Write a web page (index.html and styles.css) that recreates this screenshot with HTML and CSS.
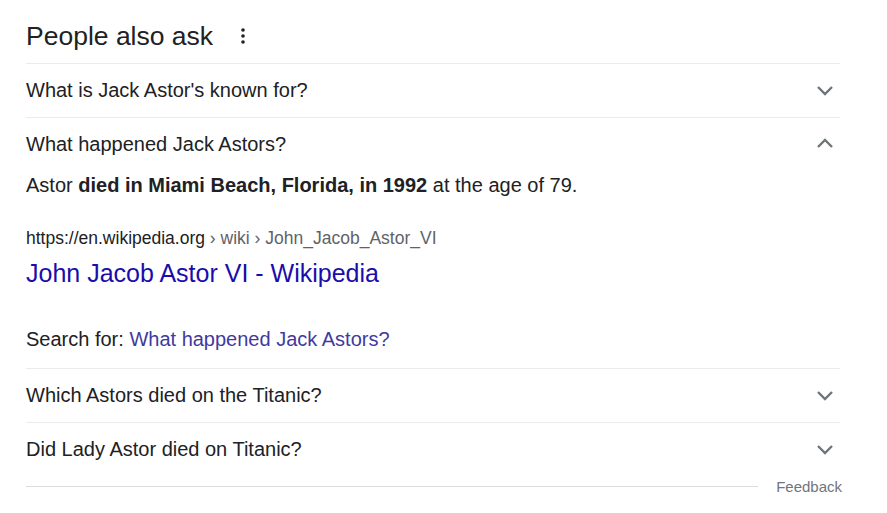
FILE: index.html
```html
<!DOCTYPE html>
<html lang="en">
<head>
<meta charset="utf-8">
<title>People also ask</title>
<link rel="stylesheet" href="styles.css">
</head>
<body>
<div class="paa">
  <div class="paa-head">
    <h2 class="paa-title">People also ask</h2>
    <svg class="dots" width="4" height="16" viewBox="0 0 4 16"><circle cx="2" cy="2" r="1.8"/><circle cx="2" cy="8" r="1.8"/><circle cx="2" cy="14" r="1.8"/></svg>
  </div>

  <div class="row">
    <span class="q">What is Jack Astor's known for?</span>
    <svg class="chev" width="18" height="12" viewBox="0 0 18 12"><polyline points="2,3 9,10 16,3"/></svg>
  </div>

  <div class="row">
    <span class="q">What happened Jack Astors?</span>
    <svg class="chev" width="18" height="12" viewBox="0 0 18 12"><polyline points="2,9 9,2 16,9"/></svg>
  </div>
  <div class="answer">
    <p class="ans-text">Astor <b>died in Miami Beach, Florida, in 1992</b> at the age of 79.</p>
    <div class="cite">https://en.wikipedia.org<span class="crumb"> › wiki › John_Jacob_Astor_VI</span></div>
    <a class="res-link" href="#">John Jacob Astor VI - Wikipedia</a>
    <p class="search-for">Search for: <a href="#">What happened Jack Astors?</a></p>
  </div>

  <div class="row">
    <span class="q">Which Astors died on the Titanic?</span>
    <svg class="chev" width="18" height="12" viewBox="0 0 18 12"><polyline points="2,3 9,10 16,3"/></svg>
  </div>

  <div class="row">
    <span class="q">Did Lady Astor died on Titanic?</span>
    <svg class="chev" width="18" height="12" viewBox="0 0 18 12"><polyline points="2,3 9,10 16,3"/></svg>
  </div>

  <div class="foot">
    <div class="foot-line"></div>
    <span class="feedback">Feedback</span>
  </div>
</div>
</body>
</html>
```
FILE: styles.css
```css
* { box-sizing: border-box; }
body {
  margin: 0;
  background: #fff;
  font-family: "Liberation Sans", Arial, sans-serif;
  color: #202124;
}
.paa {
  margin-left: 26px;
  width: 814px;
}
.paa-head {
  height: 63px;
  padding-top: 8px;
  display: flex;
  align-items: center;
}
.paa-title {
  margin: 0;
  font-size: 26.5px;
  font-weight: normal;
  line-height: 32px;
}
.dots {
  margin-left: 28px;
  fill: #202124;
}
.row {
  height: 54px;
  border-top: 1px solid #ebebeb;
  display: flex;
  align-items: center;
  justify-content: space-between;
  padding-bottom: 2px;
}
.q {
  font-size: 20px;
  line-height: 26px;
}
.chev {
  margin-right: 6px;
  fill: none;
  stroke: #70757a;
  stroke-width: 2.4;
}
.answer {
  padding-bottom: 15px;
}
.ans-text {
  margin: 0;
  font-size: 20px;
  line-height: 28px;
}
.cite {
  margin-top: 27px;
  font-size: 17.5px;
  line-height: 24px;
  color: #202124;
}
.crumb { color: #5f6368; }
.res-link {
  display: block;
  margin-top: 7px;
  font-size: 25px;
  line-height: 32px;
  color: #1a0dab;
  text-decoration: none;
}
.search-for {
  margin: 36px 0 0;
  font-size: 20px;
  line-height: 28px;
}
.search-for a {
  color: #3f3a9e;
  text-decoration: none;
}
.foot {
  height: 20px;
  display: flex;
  align-items: center;
  margin-top: 0;
  margin-right: -2px;
}
.foot-line {
  flex: 1;
  border-top: 1px solid #dadce0;
}
.feedback {
  margin-left: 18px;
  font-size: 15px;
  color: #70757a;
}
```
